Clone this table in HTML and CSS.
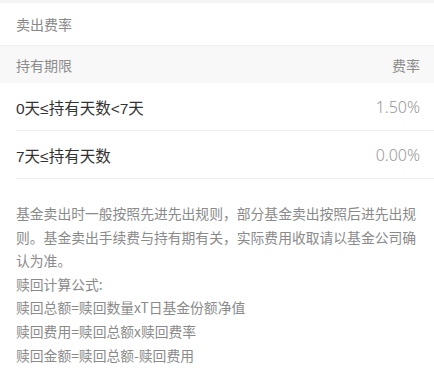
FILE: index.html
```html
<!DOCTYPE html>
<html>
<head>
    <meta charset="utf-8">
    <meta name="viewport" content="width=device-width, initial-scale=1.0">
    <link rel="stylesheet" href="styles.css">
</head>
<body>

<div class="fee-card">
    <div class="fee-title">卖出费率</div>

    <div class="fee-head">
        <span>持有期限</span>
        <span>费率</span>
    </div>

    <div class="fee-row">
        <span class="fee-term">0天≤持有天数&lt;7天</span>
        <span class="fee-rate">1.50%</span>
    </div>
    <div class="fee-row">
        <span class="fee-term">7天≤持有天数</span>
        <span class="fee-rate">0.00%</span>
    </div>

    <div class="fee-notes">
        <p>基金卖出时一般按照先进先出规则，部分基金卖出按照后进先出规则。基金卖出手续费与持有期有关，实际费用收取请以基金公司确认为准。</p>
        <p>赎回计算公式:</p>
        <p>赎回总额=赎回数量xT日基金份额净值</p>
        <p>赎回费用=赎回总额x赎回费率</p>
        <p>赎回金额=赎回总额-赎回费用</p>
    </div>
</div>

</body>
</html>
```

FILE: styles.css
```css
body {
    margin: 0;
    padding: 3px 0 0;
    background-color: #f5f5f7;
    font-family: "Noto Sans CJK SC", "Noto Sans", sans-serif;
}

.fee-card {
    background-color: #fff;
    min-height: 375px;
}

.fee-title {
    height: 42px;
    line-height: 43px;
    padding: 0 16px;
    font-size: 14px;
    color: #888;
    border-bottom: 1px solid #eee;
}

.fee-head {
    display: flex;
    justify-content: space-between;
    align-items: center;
    height: 37px;
    padding: 0 14px 0 16px;
    background-color: #f8f8f8;
    font-size: 14px;
    color: #8c8c8c;
}

.fee-row {
    display: flex;
    justify-content: space-between;
    align-items: center;
    height: 47px;
    margin-left: 16px;
    padding-right: 14px;
    border-bottom: 1px solid #eee;
}

/* last row line runs the full width */
.fee-row:last-of-type {
    margin-left: 0;
    padding-left: 16px;
}

.fee-term {
    font-family: "Liberation Sans", "Noto Sans CJK SC", sans-serif;
    font-size: 15.5px;
    color: #333;
}

.fee-rate {
    font-family: "Noto Sans", sans-serif;
    font-weight: 300;
    font-size: 16px;
    color: #999;
}

.fee-notes {
    padding: 23px 16px 10px;
    font-size: 13.8px;
    line-height: 23.6px;
    color: #8a8a8a;
}

.fee-notes p {
    margin: 0;
}
```
